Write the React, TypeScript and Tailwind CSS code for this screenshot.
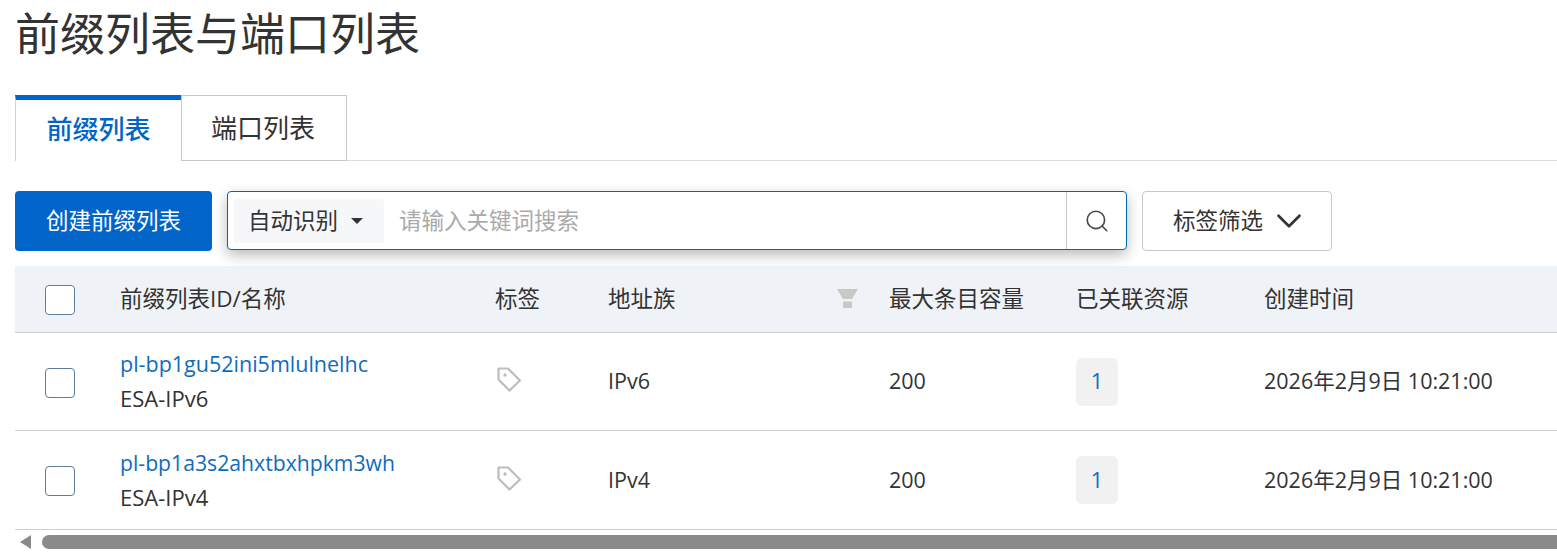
import React from 'react';
import { Search, ChevronDown } from 'lucide-react';

const gridCols = 'grid grid-cols-[105px_375px_113px_281px_187px_188px_1fr]';

const rows = [
  { id: 'pl-bp1gu52ini5mlulnelhc', idSize: 'text-[21.5px]', name: 'ESA-IPv6', family: 'IPv6', height: 'h-[98px]' },
  { id: 'pl-bp1a3s2ahxtbxhpkm3wh', idSize: 'text-[21.2px]', name: 'ESA-IPv4', family: 'IPv4', height: 'h-[99px]' },
];

const Checkbox = () => (
  <div className="ml-[30px] mt-[2px] h-[30px] w-[30px] rounded-[4px] border border-[#5f7d99] bg-white" />
);

const TagIcon = () => (
  <svg className="ml-[2px] -mt-[4px]" width="25" height="25" viewBox="0 0 25 25" fill="none" stroke="#bdbdbd" strokeWidth="2.2">
    <path d="M1.5 1.5 H11 L23 13.5 L12.5 23.5 L1.5 12.5 Z" strokeLinejoin="round" />
    <circle cx="8" cy="8" r="1.7" fill="#bdbdbd" stroke="none" />
  </svg>
);

const FunnelIcon = () => (
  <svg width="21" height="20" viewBox="0 0 21 20" fill="#c8c8c8">
    <path d="M0 0 H21 L15 10 H6 Z" />
    <rect x="6" y="12.5" width="9" height="6.5" />
  </svg>
);

export default function App() {
  return (
    <div className="h-[560px] w-[1557px] overflow-hidden bg-white font-['Open_Sans','Noto_Sans_CJK_SC',sans-serif] text-[22.5px] text-[#333333]">
      <h1 className="h-[95px] pl-[15px] pt-[1px] text-[45px] leading-[66px] font-normal">前缀列表与端口列表</h1>

      <div className="ml-[15px] flex h-[66px] border-b border-[#dddddd]">
        <div className="-mb-px flex h-[66px] w-[167px] items-center justify-center border-l border-l-[#d0d0d0] border-t-[5px] border-t-[#0064c8] bg-white pb-[3px] pr-[1px] text-[26px] font-medium text-[#0064c8]">
          前缀列表
        </div>
        <div className="flex h-[66px] w-[166px] items-center justify-center border border-[#c8c8c8] -ml-px pr-[2px] text-[26px]">
          端口列表
        </div>
      </div>

      <div className="ml-[15px] mt-[30px] flex items-start">
        <button className="h-[60px] w-[197px] rounded-[4px] bg-[#0064c8] text-white">创建前缀列表</button>
        <div className="ml-[15px] flex h-[59px] w-[900px] items-center rounded-[4px] border border-[#006ba8] bg-white pl-[6px] shadow-[0_5px_14px_rgba(0,0,0,0.28)]">
          <div className="flex h-[44px] w-[150px] items-center rounded-[3px] bg-[#f6f7f9] pl-[14px]">
            <span>自动识别</span>
            <span className="ml-[13px] h-0 w-0 border-x-[6px] border-t-[6px] border-x-transparent border-t-[#333333]" />
          </div>
          <span className="ml-[15px] flex-1 text-[#aaaaaa]">请输入关键词搜索</span>
          <div className="flex h-full w-[60px] items-center justify-center border-l border-[#c8c8c8]">
            <Search size={26} strokeWidth={1.5} color="#444444" />
          </div>
        </div>
        <button className="ml-[15px] flex h-[60px] w-[190px] items-center justify-center gap-[5px] rounded-[4px] border border-[#c8c8c8] bg-white pl-[9px]">
          <span>标签筛选</span>
          <ChevronDown size={42} strokeWidth={1.5} color="#333333" />
        </button>
      </div>

      <div className="ml-[15px] mt-[15px]">
        <div className={`${gridCols} h-[67px] items-center border-b border-[#c8ccd2] bg-[#eff2f6]`}>
          <Checkbox />
          <span className="-mt-[1px]">前缀列表ID/名称</span>
          <span className="-mt-[1px]">标签</span>
          <div className="flex items-center justify-between pr-[31px]">
            <span className="-mt-[1px]">地址族</span>
            <FunnelIcon />
          </div>
          <span className="-mt-[1px]">最大条目容量</span>
          <span className="-mt-[1px]">已关联资源</span>
          <span className="-mt-[1px]">创建时间</span>
        </div>

        {rows.map((row) => (
          <div key={row.id} className={`${gridCols} ${row.height} items-center border-b border-[#d0d0d0]`}>
            <Checkbox />
            <div className="-mt-[1px] flex flex-col leading-[34px]">
              <span className={`${row.idSize} text-[#0f6cbd]`}>{row.id}</span>
              <span className="text-[22px]">{row.name}</span>
            </div>
            <TagIcon />
            <span className="text-[21.5px]">{row.family}</span>
            <span className="text-[21.5px]">200</span>
            <div className="flex h-[48px] w-[42px] items-center justify-center rounded-[6px] bg-[#f1f1f1] text-[21.5px] text-[#0f6cbd]">
              1
            </div>
            <span className="whitespace-nowrap text-[21.5px]">2026年2月9日 10:21:00</span>
          </div>
        ))}
      </div>

      <div className="mt-[5px] flex h-[14px] items-center pl-[20px]">
        <span className="h-0 w-0 border-y-[7px] border-r-[11px] border-y-transparent border-r-[#8a8a8a]" />
        <div className="ml-[11px] h-[14px] flex-1 rounded-l-[7px] bg-[#8a8a8a]" />
      </div>
    </div>
  );
}
